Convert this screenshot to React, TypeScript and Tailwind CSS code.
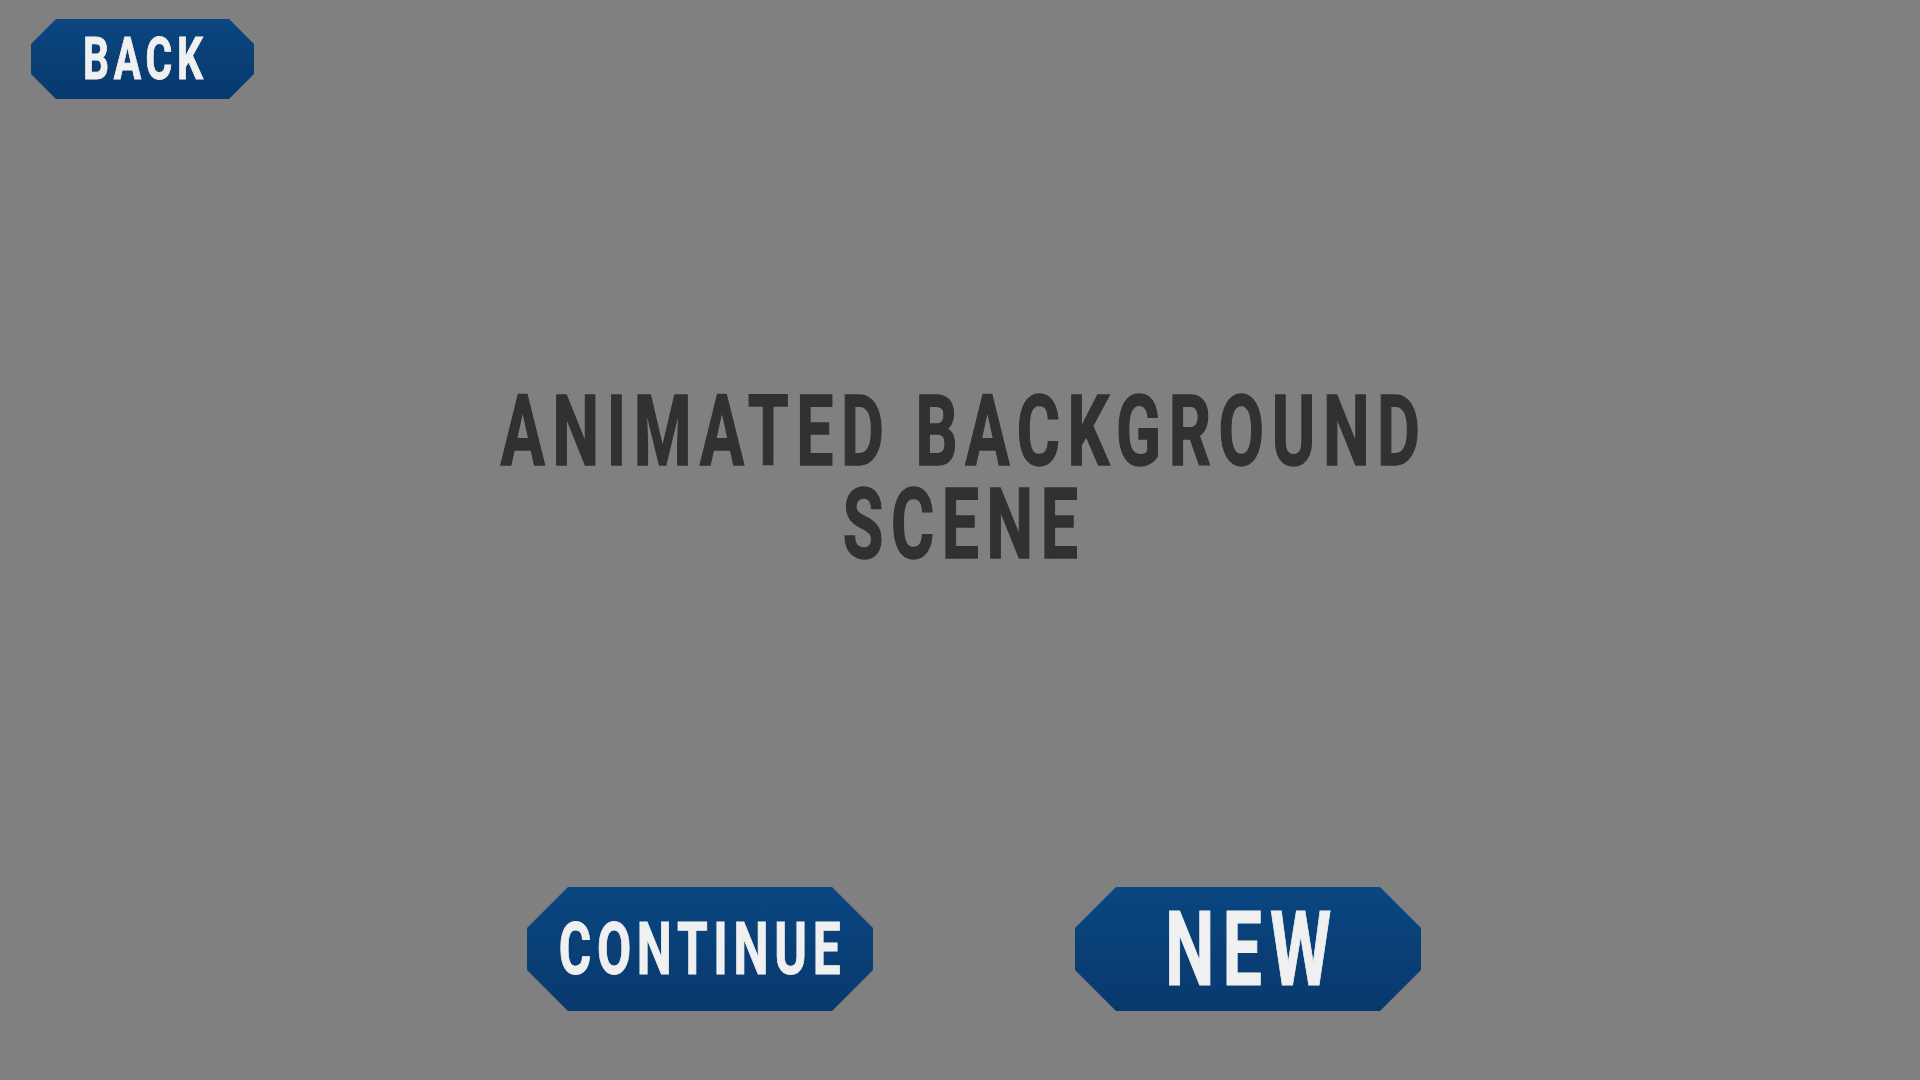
import React from "react";

const font = { fontFamily: "Roboto, 'Liberation Sans', sans-serif" };

function Label({ text, size }: { text: string; size: string }) {
  return (
    <span
      className={`inline-block font-bold leading-none tracking-[0.115em] pl-[0.115em] scale-x-[0.68] text-[#f0f0f0] [-webkit-text-stroke:1px_#f0f0f0] ${size}`}
      style={font}
    >
      {text}
    </span>
  );
}

const shapeSmall =
  "[clip-path:polygon(25px_0,198px_0,223px_25px,223px_55px,198px_80px,25px_80px,0_55px,0_25px)]";
const shapeBig =
  "[clip-path:polygon(41px_0,305px_0,346px_41px,346px_83px,305px_124px,41px_124px,0_83px,0_41px)]";

export default function App() {
  return (
    <div className="w-full h-screen overflow-hidden bg-[#808080] flex flex-col" style={font}>
      <div className="pt-[19px] pl-[31px]">
        <button
          className={`w-[223px] h-[80px] flex items-center justify-center bg-gradient-to-b from-[#0a4681] to-[#08396d] ${shapeSmall}`}
        >
          <Label text="BACK" size="text-[60px]" />
        </button>
      </div>

      <div className="mt-[286px] flex flex-col items-center">
        <p
          className="inline-block text-center font-bold text-[98px] leading-[93px] tracking-[0.115em] pl-[0.115em] scale-x-[0.674] text-[#313131] [-webkit-text-stroke:1.5px_#313131] whitespace-nowrap"
          style={font}
        >
          ANIMATED BACKGROUND
          <br />
          SCENE
        </p>
      </div>

      <div className="mt-[316px] pl-[527px] flex gap-[202px]">
        <button
          className={`w-[346px] h-[124px] flex items-center justify-center bg-gradient-to-b from-[#0a4681] to-[#08396d] ${shapeBig}`}
        >
          <Label text="CONTINUE" size="text-[73px]" />
        </button>
        <button
          className={`w-[346px] h-[124px] flex items-center justify-center bg-gradient-to-b from-[#0a4681] to-[#08396d] ${shapeBig}`}
        >
          <Label text="NEW" size="text-[103px]" />
        </button>
      </div>
    </div>
  );
}
